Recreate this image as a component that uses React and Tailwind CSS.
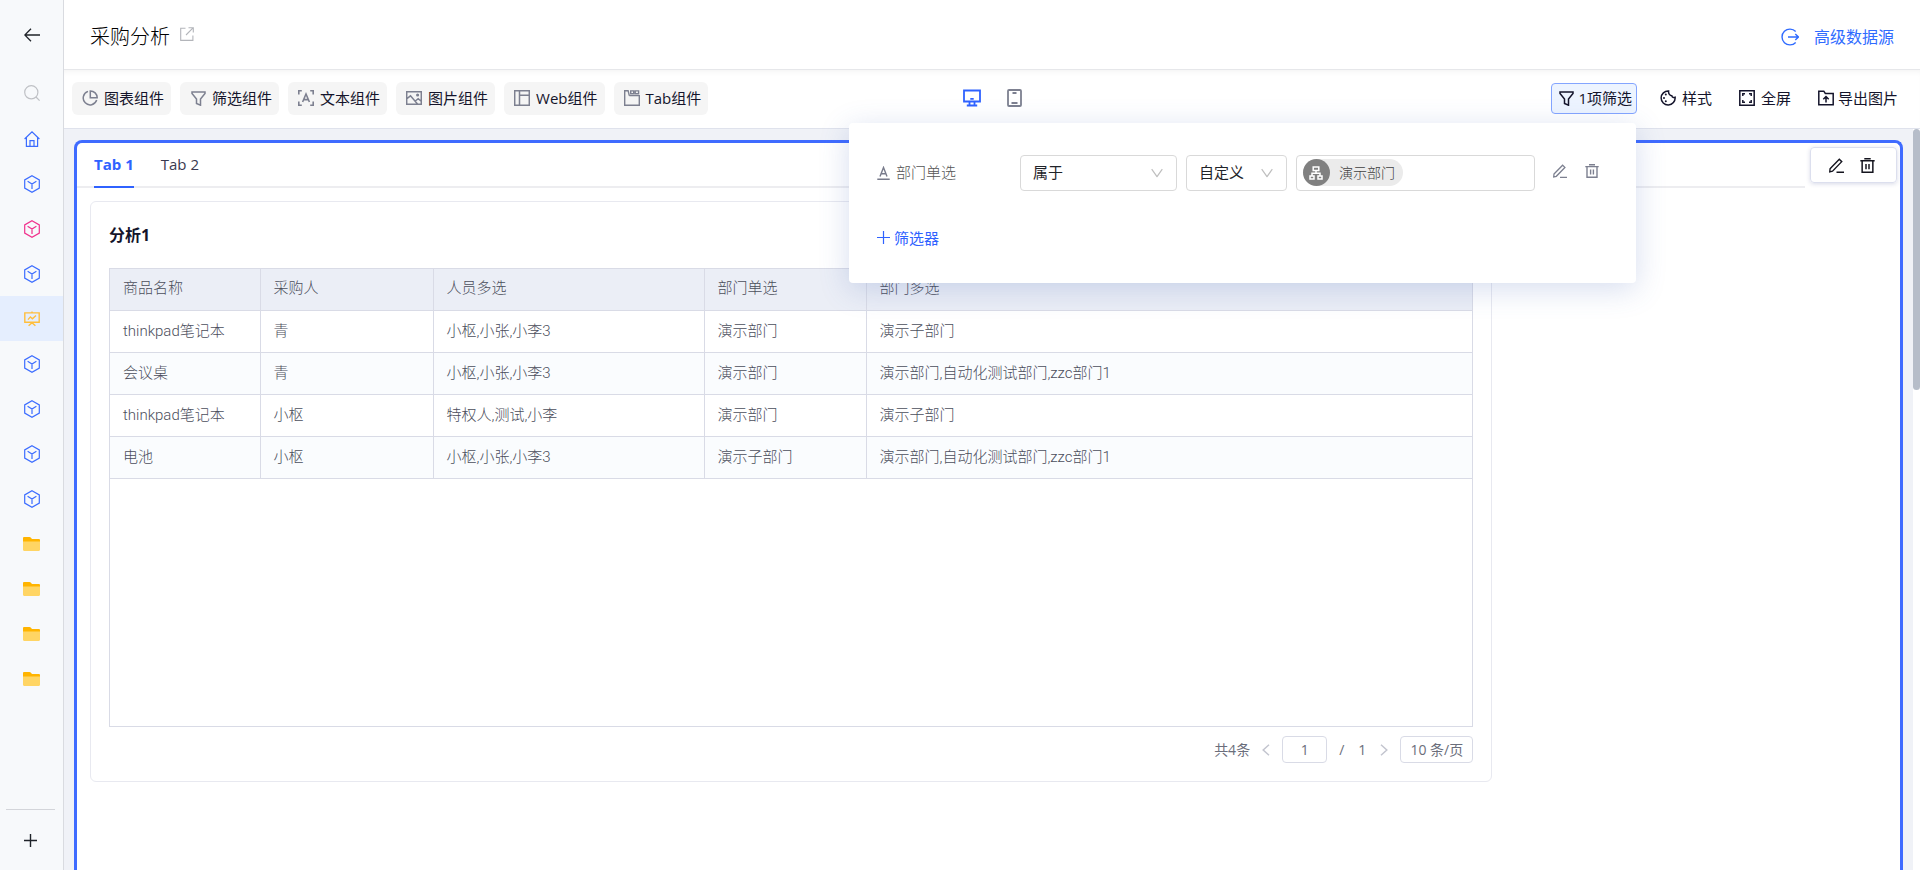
import React from "react";

const Svg = ({ size = 16, w = 16, h = 16, sw = 1.4, className = "", children }) => (
  <svg
    width={size}
    height={(size * h) / w}
    viewBox={`0 0 ${w} ${h}`}
    fill="none"
    stroke="currentColor"
    strokeWidth={sw}
    className={"shrink-0 " + className}
    aria-hidden="true"
  >
    {children}
  </svg>
);

const BackIcon = () => (
  <Svg sw={1.3}><path d="M16 8H.8M7 1.8.8 8 7 14.2" /></Svg>
);
const SearchIcon = () => (
  <Svg sw={1.2}><circle cx="7.3" cy="7.3" r="6.6" /><path d="M12 12l3.6 3.6" /></Svg>
);
const HomeIcon = () => (
  <Svg sw={1.2}><path d="M.6 8 8 .9 15.4 8M2.4 6.6v8.7h11.2V6.6M6 15.3V9.6h4v5.7" /></Svg>
);
const CubeIcon = () => (
  <Svg w={16} h={18} sw={1.2}><path d="M8 .8l7.3 4.1v8.2L8 17.2.7 13.1V4.9zM3.6 6.3 8 9l4.4-2.7M8 9v5" /></Svg>
);
const BoardIcon = () => (
  <Svg sw={1.4}><path d="M.8 1.9h14.4v9.4H.8zM8 .4v1.5M4 8.6l2.4-2.7 2 1.8L12 4.4M4.6 14.8 8 11.8l3.4 3" /></Svg>
);
const FolderIcon = () => (
  <svg width="17" height="14" viewBox="0 0 17 14" aria-hidden="true">
    <path d="M0 1.2C0 .5.5 0 1.2 0h5.3c.5 0 .9.2 1.2.6L9 2h6.8c.7 0 1.2.5 1.2 1.2V8H0z" fill="#ffb400" />
    <path d="M0 4.6h17v8.2c0 .7-.5 1.2-1.2 1.2H1.2C.5 14 0 13.5 0 12.8z" fill="#ffd564" />
  </svg>
);
const PlusIcon = ({ sw = 1.4 }) => (
  <Svg size={13} w={13} h={13} sw={sw}><path d="M6.5 0v13M0 6.5h13" /></Svg>
);
const ShareIcon = () => (
  <Svg size={14} w={14} h={14} sw={1.1}><path d="M5.5 1.2H.7v12.2h12.2V8.5M8.5.7h4.8v4.8M13.3.7 6 8" /></Svg>
);
const EnterIcon = () => (
  <Svg size={18} w={18} h={18} sw={1.4}><path d="M14.7 3.6a7.9 7.9 0 1 0 0 10.8M7 9h10.4M14.3 5.9 17.4 9l-3.1 3.1" /></Svg>
);
const PieIcon = () => (
  <Svg sw={1.5}><path d="M6 1.4a6.9 6.9 0 1 0 8.700 8.700" /><path d="M8.300.9v6.800h6.900A6.900 6.900 0 0 0 8.300.9z" /></Svg>
);
const FunnelIcon = () => (
  <Svg size={15} w={15} h={15} sw={1.5}><path d="M1 .9h13v1.6L9.5 8v6.2l-4-1.7V8L1 2.5z" /></Svg>
);
const TextIcon = () => (
  <Svg sw={1.6}><path d="M.8 4.5V.8h3M12.2.8h3v3.7M15.2 11.5v3.7h-3M3.8 15.2h-3v-3.7M4.6 12 8 4l3.4 8M5.7 9.6h4.6" /></Svg>
);
const ImageIcon = () => (
  <Svg sw={1.5}><path d="M.7 1.7h14.6v12.6H.7zM.9 8.6l3.6-2.8 7 8.2M9.3 11l2.9-2.3 3 2.6" /><circle cx="11.6" cy="5" r=".8" fill="currentColor" /></Svg>
);
const WebIcon = () => (
  <Svg sw={1.5}><path d="M.7.7h14.6v14.6H.7zM5.5.7v14.6M5.5 5.3h9.8" /></Svg>
);
const TabIcon = () => (
  <Svg><path d="M5.3 5.6h10v9.7H.7V.7h3.4l1.2 4.9M6.7 3.8V.9h3v2.9zM11.2 3.8V.9h3.4v2.9z" /></Svg>
);
const DesktopIcon = () => (
  <Svg size={18} w={18} h={18} sw={1.8}><path d="M1 1.5h16v11H1zM6.5 12.5v3.8M11.5 12.5v3.8M3.8 16.5h10.4M7.3 9.8h3.4" /></Svg>
);
const PhoneIcon = () => (
  <Svg size={15} w={15} h={18} sw={1.8}><rect x="1" y="1" width="13" height="16" rx="1" /><path d="M5.5 4h4M4.5 14h6" /></Svg>
);
const PaletteIcon = () => (
  <Svg sw={1.5}>
    <path d="M8.6 1a7 7 0 1 0 6.500 6.300c-1.500.6-3 0-3.300-1.500-1.900 0-3.500-2.200-3.200-4.800z" />
    <g fill="currentColor" stroke="none"><circle cx="5.8" cy="4.5" r="1" /><circle cx="4" cy="8" r="1" /><circle cx="5.8" cy="11.3" r="1" /></g>
  </Svg>
);
const FullIcon = () => (
  <Svg sw={1.5}><path d="M.8.8h14.4v14.4H.8zM3.8 6V3.8H6M10 3.8h2.2V6M12.2 10v2.2H10M6 12.2H3.8V10" /></Svg>
);
const ExportIcon = () => (
  <Svg sw={1.5}><path d="M.8 14.8V1.2h5l1.5 2.2h7.900v11.400zM8 12.500V6.800M5.300 9.200 8 6.500l2.700 2.700" /></Svg>
);
const PencilIcon = ({ size = 14 }) => (
  <Svg size={size} w={14} h={14} sw={1.3}><path d="M1 10 9.6 1.2l2.3 2.2L3.3 12.3l-2.6.7zM7 13.3h7" /></Svg>
);
const TrashIcon = ({ size = 14 }) => (
  <Svg size={size} w={14} h={14} sw={1.4}><path d="M.3 2.6h13.4M4 .7h6M2 2.6v10.7h10V2.6M5.6 5.6v4.9M8.4 5.6v4.9" /></Svg>
);
const LetterIcon = () => (
  <Svg size={13} w={13} h={14} sw={1.4}><path d="M.3 13.3h12.4M3 10.5 6.5 1.5l3.5 9M4.3 7.8h4.4" /></Svg>
);
const OrgIcon = () => (
  <Svg size={14} w={14} h={14} sw={1.5}><path d="M4.2.9h5.6v3.6H4.2zM7 4.5v2.7M3 10V7.2h8V10M1 10h4v3H1zM9 10h4v3H9z" /></Svg>
);
const Chevron = ({ dir }) => (
  <Svg size={8} w={8} h={12} sw={1.5}>
    <path d={dir === "left" ? "M7 .8 1.2 6 7 11.2" : "M1 .8 6.8 6 1 11.2"} />
  </Svg>
);

const tools = [
  ["图表组件", PieIcon],
  ["筛选组件", FunnelIcon],
  ["文本组件", TextIcon],
  ["图片组件", ImageIcon],
  ["Web组件", WebIcon],
  ["Tab组件", TabIcon],
];

const nav = [
  ["首页", HomeIcon, "text-[#3b6cff]"],
  ["表单1", CubeIcon, "text-[#3b6cff]"],
  ["表单2", CubeIcon, "text-[#f0308c]"],
  ["表单3", CubeIcon, "text-[#3b6cff]"],
  ["采购分析", BoardIcon, "bg-[#e5eefe] text-[#ffbe3c]"],
  ["表单4", CubeIcon, "text-[#3b6cff]"],
  ["表单5", CubeIcon, "text-[#3b6cff]"],
  ["表单6", CubeIcon, "text-[#3b6cff]"],
  ["表单7", CubeIcon, "text-[#3b6cff]"],
  ["文件夹1", FolderIcon, ""],
  ["文件夹2", FolderIcon, ""],
  ["文件夹3", FolderIcon, ""],
  ["文件夹4", FolderIcon, ""],
];

const columns = ["商品名称", "采购人", "人员多选", "部门单选", "部门多选"];
const rows = [
  ["thinkpad笔记本", "青", "小枢,小张,小李3", "演示部门", "演示子部门"],
  ["会议桌", "青", "小枢,小张,小李3", "演示部门", "演示部门,自动化测试部门,zzc部门1"],
  ["thinkpad笔记本", "小枢", "特权人,测试,小李", "演示部门", "演示子部门"],
  ["电池", "小枢", "小枢,小张,小李3", "演示子部门", "演示部门,自动化测试部门,zzc部门1"],
];

function Sidebar() {
  return (
    <nav className="flex w-16 shrink-0 flex-col border-r border-[#d9dbe0] bg-[#f7f9fb]">
      <button aria-label="返回" className="flex h-[70px] items-center justify-center text-[#1f2329]"><BackIcon /></button>
      <button aria-label="搜索" className="flex h-[46px] items-center justify-center text-[#bfc1c5]"><SearchIcon /></button>
      {nav.map(([label, Icon, tone]) => (
        <a key={label} href="#" aria-label={label} className={"flex h-[45px] items-center justify-center " + tone}>
          <Icon />
        </a>
      ))}
      <div className="mt-auto mr-2 ml-1.5 border-t border-[#d3d5da]">
        <button aria-label="新建" className="flex h-[60px] w-full items-center justify-center text-[#1f2329]"><PlusIcon /></button>
      </div>
    </nav>
  );
}

function Select({ label, value, className }) {
  return (
    <div className={"relative " + className}>
      <select
        aria-label={label}
        defaultValue={value}
        className="h-9 w-full appearance-none rounded border border-[#d9d9d9] bg-white pr-8 pl-3 text-[15px] text-[#1f2329]"
      >
        <option>{value}</option>
      </select>
      <Svg size={12} w={12} h={9} sw={1.2} className="pointer-events-none absolute top-1/2 right-3.5 -translate-y-1/2 text-[#bfbfbf]">
        <path d="M.7.7 6 8.2 11.3.7" />
      </Svg>
    </div>
  );
}

function FilterPanel() {
  return (
    <div className="absolute top-full right-px z-10 mt-[9px] h-40 w-[787px] rounded bg-white px-7 pt-8 text-[15px] text-[#555] shadow-[0_6px_30px_rgba(70,100,180,0.22)]">
      <div className="flex items-center">
        <div className="flex w-[143px] items-center gap-1.5 font-light">
          <span className="text-[#787b8b]"><LetterIcon /></span>
          <span>部门单选</span>
        </div>
        <Select label="条件" value="属于" className="w-[157px]" />
        <Select label="取值方式" value="自定义" className="ml-[9px] w-[101px]" />
        <div className="ml-[9px] flex h-9 w-[239px] items-center rounded-sm border border-[#d9d9d9] px-1.5">
          <span className="flex h-[27px] items-center gap-[9px] rounded-full bg-[#ebebeb] pr-2 text-sm font-light text-[#404040]">
            <span className="flex size-[27px] items-center justify-center rounded-full bg-[#808080] text-white"><OrgIcon /></span>
            演示部门
          </span>
        </div>
        <button aria-label="编辑筛选" className="ml-[18px] pb-1 text-[#7d8090]"><PencilIcon /></button>
        <button aria-label="删除筛选" className="ml-[18px] pb-1 text-[#7d8090]"><TrashIcon /></button>
      </div>
      <button className="mt-9 flex items-center gap-1 text-[#2f62ff]">
        <PlusIcon sw={1.2} />
        <span>筛选器</span>
      </button>
    </div>
  );
}

function Toolbar() {
  const action = "flex items-center gap-1.5";
  return (
    <div className="flex h-[59px] shrink-0 items-center justify-between border-b border-[#dfe2ec] bg-white px-2 pb-0.5 text-[15px] text-[#14142b] shadow-[inset_0_5px_6px_-4px_rgba(0,0,0,0.06)]">
      <div className="flex flex-1 gap-[9px]">
        {tools.map(([label, Icon]) => (
          <button key={label} className="flex h-[33px] items-center gap-1.5 rounded-md bg-[#f5f5f5] pr-[7px] pl-2.5 whitespace-nowrap">
            <span className="flex w-4 justify-center text-[#7d8090]"><Icon /></span>
            {label}
          </button>
        ))}
      </div>
      <div className="flex items-center gap-[26px]">
        <button aria-label="桌面端" className="text-[#2f62ff]"><DesktopIcon /></button>
        <button aria-label="移动端" className="text-[#7d8090]"><PhoneIcon /></button>
      </div>
      <div className="flex flex-1 items-center justify-end gap-[27px] whitespace-nowrap">
        <div className="relative -mr-1">
          <button className="flex h-[31px] items-center gap-1 rounded border border-[#84a5ff] bg-[#edf4ff] pr-1 pl-[7px]">
            <FunnelIcon />
            1项筛选
          </button>
          <FilterPanel />
        </div>
        <button className={action}><PaletteIcon />样式</button>
        <button className={action}><FullIcon />全屏</button>
        <button className="mr-3.5 flex items-center gap-1"><ExportIcon />导出图片</button>
      </div>
    </div>
  );
}

function AnalysisCard() {
  return (
    <section className="mx-[13px] mt-[13px] flex h-[581px] w-10/13 flex-col rounded-md border border-[#e8e9f0] px-[18px]">
      <h2 className="flex h-[66px] items-center text-base font-bold text-[#14142b]">分析1</h2>
      <div className="h-[459px] border border-[#d9dbe6] font-[Roboto,'Noto_Sans_CJK_SC',sans-serif] font-light">
        <table className="w-full table-fixed border-collapse text-[15px] text-[#4b4e5c]">
          <colgroup>
            <col className="w-[150px]" />
            <col className="w-[173px]" />
            <col className="w-[271px]" />
            <col className="w-[162px]" />
            <col />
          </colgroup>
          <thead>
            <tr className="h-[41px] border-b border-[#d9dbe6] bg-[#ebeef6]">
              {columns.map((c) => (
                <th key={c} className="border-r border-[#d9dbe6] px-[13px] pb-0.5 text-left font-light last:border-r-0">{c}</th>
              ))}
            </tr>
          </thead>
          <tbody>
            {rows.map((r, i) => (
              <tr key={i} className="h-[42px] border-b border-[#d9dbe6] even:bg-[#fafcfe]">
                {r.map((c, j) => (
                  <td key={j} className="border-r border-[#d9dbe6] px-[13px] last:border-r-0">{c}</td>
                ))}
              </tr>
            ))}
          </tbody>
        </table>
      </div>
      <div className="mt-[9px] flex h-[27px] items-center justify-end text-sm text-[#6b6e7b]">
        <span>共4条</span>
        <button aria-label="上一页" className="mx-3 text-[#c3c5cf]"><Chevron dir="left" /></button>
        <input aria-label="页码" defaultValue="1" className="h-[27px] w-[45px] rounded border border-[#d9dbe6] text-center" />
        <span className="mr-3.5 ml-3">/</span>
        <span>1</span>
        <button aria-label="下一页" className="mr-3 ml-3.5 text-[#c3c5cf]"><Chevron dir="right" /></button>
        <select aria-label="每页条数" className="h-[27px] w-[73px] appearance-none rounded border border-[#d9dbe6] bg-white text-center">
          <option>10 条/页</option>
        </select>
      </div>
    </section>
  );
}

export default function App() {
  return (
    <div className="flex h-screen overflow-hidden bg-white font-['Open_Sans','Noto_Sans_CJK_SC',sans-serif]">
      <Sidebar />
      <div className="flex min-w-0 flex-1 flex-col">
        <header className="flex h-[70px] shrink-0 items-center justify-between border-b border-[#e6e7ea] bg-white px-[26px] pt-1">
          <div className="flex items-center gap-2.5">
            <h1 className="text-xl font-light text-black">采购分析</h1>
            <a href="#" aria-label="在新窗口打开" className="mb-1.5 text-[#b3b5ba]"><ShareIcon /></a>
          </div>
          <a href="#" className="flex items-center gap-[15px] text-base text-[#2f6bff]">
            <EnterIcon />
            高级数据源
          </a>
        </header>
        <Toolbar />
        <div className="flex min-h-0 flex-1 bg-[#f0f2f7]">
          <main className="mx-2.5 mt-[11px] min-w-0 flex-1 overflow-hidden rounded-t-lg border-3 border-b-0 border-[#3f6bff] bg-white">
            <div className="flex h-[45px]">
              <div role="tablist" className="flex flex-1 gap-[27px] border-b-2 border-[#ededf0] pl-[17px] text-[15px]">
                <button role="tab" aria-selected="true" className="-mb-0.5 border-b-2 border-[#2f62ff] font-bold text-[#2f62ff]">Tab 1</button>
                <button role="tab" aria-selected="false" className="text-[#3a3a50]">Tab 2</button>
              </div>
              <div className="mt-1 mr-[3px] ml-[5px] flex h-9 w-[87px] items-center justify-center gap-4 rounded border border-[#dcdfee] pr-1 text-[#14141e] shadow-[0_1px_4px_rgba(60,70,140,0.2)]">
                <button aria-label="编辑组件"><PencilIcon size={15} /></button>
                <button aria-label="删除组件"><TrashIcon size={15} /></button>
              </div>
            </div>
            <AnalysisCard />
          </main>
          <div className="w-[7px] bg-white">
            <div className="h-[261px] rounded-full bg-[#b6bdc9]" />
          </div>
        </div>
      </div>
    </div>
  );
}
